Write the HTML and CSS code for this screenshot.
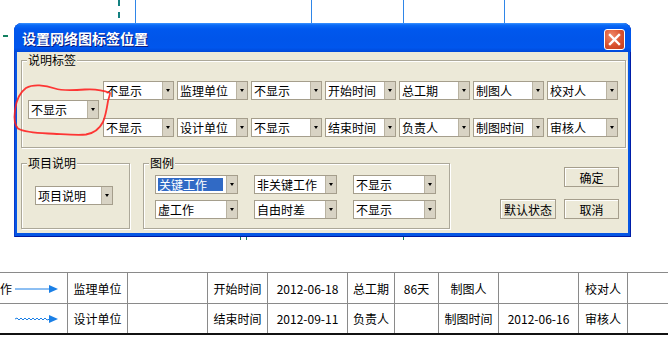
FILE: index.html
```html
<!doctype html>
<html lang="zh-CN">
 <head>
  <meta charset="UTF-8">
  <title>设置网络图标签位置</title>
  <link rel="stylesheet" href="styles.css">
 </head>
 <body>
  <div class="desk">
   <!-- 网络图背景 -->
   <span class="link link-a"></span>
   <span class="link link-b"></span>
   <span class="link link-c"></span>
   <span class="link link-d"></span>
   <span class="virtual"></span>
   <span class="tick tick-a"></span>
   <span class="tick tick-b"></span>
   <span class="tick tick-c"></span>
   <span class="tick tick-d"></span>

   <div class="sheet">
    <div class="row">
     <div class="cell legend-cell"><span class="cut">作</span>
      <svg width="58" height="29" viewBox="0 0 58 29"><line x1="6" y1="15" x2="41" y2="15" stroke="#1a7fe6" stroke-width="1"/><polygon points="40,11 49,15 40,19" fill="#1a7fe6"/></svg>
     </div>
     <div class="cell">监理单位</div>
     <div class="cell"></div>
     <div class="cell">开始时间</div>
     <div class="cell">2012-06-18</div>
     <div class="cell">总工期</div>
     <div class="cell">86天</div>
     <div class="cell">制图人</div>
     <div class="cell"></div>
     <div class="cell">校对人</div>
     <div class="cell"></div>
    </div>
    <div class="row">
     <div class="cell legend-cell"><span class="cut"></span>
      <svg width="58" height="29" viewBox="0 0 58 29"><polyline points="6,15 8,14 10,16 12,14 14,16 16,14 18,16 20,14 22,16 24,14 26,16 28,14 30,16 32,14 34,16 36,14 38,16 41,15" fill="none" stroke="#1a7fe6" stroke-width="1"/><polygon points="40,11 49,15 40,19" fill="#1a7fe6"/></svg>
     </div>
     <div class="cell">设计单位</div>
     <div class="cell"></div>
     <div class="cell">结束时间</div>
     <div class="cell">2012-09-11</div>
     <div class="cell">负责人</div>
     <div class="cell"></div>
     <div class="cell">制图时间</div>
     <div class="cell">2012-06-16</div>
     <div class="cell">审核人</div>
     <div class="cell"></div>
    </div>
   </div>

   <!-- 对话框 -->
   <div class="dialog">
    <div class="titlebar">
     <span class="title">设置网络图标签位置</span>
     <span class="close"><svg width="19" height="19" viewBox="0 0 19 19"><path d="M5 5 L14 14 M14 5 L5 14" stroke="#fff" stroke-width="2.4" stroke-linecap="square"/></svg></span>
    </div>
    <div class="panel">
     <div class="group labels">
      <span class="group-title">说明标签</span>
      <div class="combo"><span class="val">不显示</span><span class="drop"></span></div>
      <div class="label-grid">
       <div class="combo"><span class="val">不显示</span><span class="drop"></span></div>
       <div class="combo"><span class="val">监理单位</span><span class="drop"></span></div>
       <div class="combo"><span class="val">不显示</span><span class="drop"></span></div>
       <div class="combo"><span class="val">开始时间</span><span class="drop"></span></div>
       <div class="combo"><span class="val">总工期</span><span class="drop"></span></div>
       <div class="combo"><span class="val">制图人</span><span class="drop"></span></div>
       <div class="combo"><span class="val">校对人</span><span class="drop"></span></div>
       <div class="combo"><span class="val">不显示</span><span class="drop"></span></div>
       <div class="combo"><span class="val">设计单位</span><span class="drop"></span></div>
       <div class="combo"><span class="val">不显示</span><span class="drop"></span></div>
       <div class="combo"><span class="val">结束时间</span><span class="drop"></span></div>
       <div class="combo"><span class="val">负责人</span><span class="drop"></span></div>
       <div class="combo"><span class="val">制图时间</span><span class="drop"></span></div>
       <div class="combo"><span class="val">审核人</span><span class="drop"></span></div>
      </div>
     </div>

     <div class="lower">
      <div class="group project">
       <span class="group-title">项目说明</span>
       <div class="combo wide"><span class="val">项目说明</span><span class="drop"></span></div>
      </div>
      <div class="group legend">
       <span class="group-title">图例</span>
       <div class="legend-grid">
        <div class="combo"><span class="val"><span class="picked">关键工作</span></span><span class="drop"></span></div>
        <div class="combo"><span class="val">非关键工作</span><span class="drop"></span></div>
        <div class="combo"><span class="val">不显示</span><span class="drop"></span></div>
        <div class="combo"><span class="val">虚工作</span><span class="drop"></span></div>
        <div class="combo"><span class="val">自由时差</span><span class="drop"></span></div>
        <div class="combo"><span class="val">不显示</span><span class="drop"></span></div>
       </div>
      </div>
      <div class="actions">
       <button class="ok">确定</button>
       <button class="reset">默认状态</button>
       <button class="cancel">取消</button>
      </div>
     </div>
    </div>
   </div>

   <!-- 红色圈注 -->
   <svg class="note" width="120" height="60" viewBox="0 0 120 60">
    <path d="M110 13 C100 9 92 9 85 9.5 C72 10.5 62 11 55 8.5 C45 5 33 4 26 8 C19 13 16 22 15 30 C14 38 14 45 18 48.5 C24 52 36 53 48 53.5 C62 54 76 55.5 86 54.5 C95 53 100 48 103 42 C106 35 107 27 108 21 C109 17 110 15 110 13" fill="none" stroke="#f22" stroke-width="1.8" stroke-linecap="round" stroke-opacity="0.9"/>
   </svg>
  </div>
 </body>
</html>
```

FILE: styles.css
```css
body {
    margin: 0;
    background: #fff;
    font-family: "Noto Sans CJK SC", "Liberation Sans", sans-serif;
    font-size: 12px;
    color: #000;
}
.desk {
    position: relative;
    width: 668px;
    height: 351px;
    overflow: hidden;
    padding-top: 272px;
    box-sizing: border-box;
}

/* 背景网络图的线条 */
.link {
    position: absolute;
    top: 0;
    width: 1px;
    height: 24px;
    background: #2f86e8;
}
.link-a { left: 135px; }
.link-b { left: 311px; }
.link-c { left: 403px; }
.link-d { left: 504px; }
.virtual {
    position: absolute;
    left: 118px;
    top: 0;
    height: 18px;
    border-left: 2px dashed #138080;
}
.tick {
    position: absolute;
    background: #138060;
}
.tick-a { left: 3px; top: 35px; width: 5px; height: 2px; }
.tick-b { left: 240px; top: 237px; width: 1px; height: 3px; }
.tick-c { left: 246px; top: 237px; width: 1px; height: 3px; }
.tick-d { left: 403px; top: 237px; width: 1px; height: 3px; }

/* 底部表格 */
.sheet {
    width: 668px;
}
.row {
    display: grid;
    grid-template-columns: 67px 60px 80px 60px 80px 47px 44px 60px 80px 49px 1fr;
    height: 30px;
    border-top: 1px solid #8a8a8a;
}
.row + .row {
    height: 29px;
    border-bottom: 2px solid #111;
}
.cell {
    border-left: 1px solid #8a8a8a;
    display: flex;
    align-items: center;
    justify-content: center;
    white-space: nowrap;
}
.legend-cell {
    border-left: none;
    justify-content: flex-start;
}
.cut {
    flex: none;
    width: 12px;
    margin-left: 0;
}
.legend-cell svg {
    margin-left: -3px;
}

/* 对话框 */
.dialog {
    position: absolute;
    left: 14px;
    top: 23px;
    width: 617px;
    height: 214px;
    box-sizing: border-box;
    padding: 0 3px 4px;
    display: flex;
    flex-direction: column;
    background: #0656e4;
    border-radius: 8px 8px 0 0;
    box-shadow: inset 1px 0 #0a3acb, inset -1px 0 #001ea8, inset 0 -1px #0019a0;
}
.titlebar {
    height: 29px;
    margin: 0 -3px;
    padding: 0 6px 0 8px;
    display: flex;
    align-items: center;
    justify-content: space-between;
    border-radius: 8px 8px 0 0;
    background: linear-gradient(#3d95ff 0, #0a6af6 2px, #0058ee 6px, #0055ea 55%, #0056ed 85%, #0048d8 100%);
}
.title {
    color: #fff;
    font-size: 14px;
    font-weight: bold;
    text-shadow: 1px 1px #0a1a80;
}
.close {
    width: 19px;
    height: 19px;
    margin-top: 4px;
    border: 1px solid #fff;
    border-radius: 3px;
    background: radial-gradient(circle at 35% 30%, #f08a6a, #d9512f 55%, #c23b1b);
    display: flex;
}
.panel {
    flex: 1;
    background: #ece9d8;
}

/* 分组框 */
.group {
    position: relative;
    border: 1px solid #aca899;
    box-shadow: 1px 1px 0 #fff, inset 1px 1px 0 #fff;
    box-sizing: border-box;
}
.group-title {
    position: absolute;
    top: -8px;
    left: 5px;
    padding: 0 1px;
    line-height: 14px;
    background: #ece9d8;
}
.labels {
    margin: 8px 2px 0 4px;
    padding: 20px 5px 10px 6px;
    display: flex;
    align-items: center;
    gap: 4px;
}
.label-grid {
    display: grid;
    grid-template-columns: repeat(7, 71px);
    column-gap: 3px;
    row-gap: 18px;
}
.lower {
    display: flex;
    align-items: flex-start;
    gap: 13px;
    margin: 15px 0 0 4px;
}
.project {
    width: 109px;
    height: 66px;
    padding: 22px 0 0 13px;
}
.legend {
    width: 307px;
    height: 66px;
    padding: 11px 0 0 11px;
}
.legend-grid {
    display: grid;
    grid-template-columns: repeat(3, 83px);
    column-gap: 16px;
    row-gap: 6px;
}

/* 下拉框 */
.combo {
    width: 71px;
    height: 19px;
    box-sizing: border-box;
    border: 1px solid #a59e8c;
    background: #fff;
    display: flex;
}
.legend-grid .combo {
    width: 83px;
}
.combo.wide {
    width: 78px;
}
.val {
    flex: 1;
    padding: 2px 3px 0 2px;
    line-height: 13px;
    white-space: nowrap;
    overflow: hidden;
}
.picked {
    display: block;
    background: #316ac5;
    color: #fff;
    padding-left: 1px;
}
.drop {
    flex: none;
    width: 10px;
    background: #d8d3c4;
    border-left: 1px solid #b9b3a2;
    display: flex;
    align-items: center;
    justify-content: center;
}
.drop::after {
    content: "";
    border-left: 2.5px solid transparent;
    border-right: 2.5px solid transparent;
    border-top: 3px solid #000;
}

/* 按钮 */
.actions {
    display: grid;
    grid-template-columns: 56px 55px;
    grid-template-rows: 20px 20px;
    column-gap: 8px;
    row-gap: 12px;
    margin: 4px 0 0 37px;
}
.actions button {
    margin: 0;
    padding: 0;
    font: inherit;
    color: #000;
    background: #ece9d8;
    border: 1px solid #a59e8c;
    box-shadow: inset 1px 1px #fff;
}
.ok { grid-column: 2; grid-row: 1; }
.reset { grid-column: 1; grid-row: 2; }
.cancel { grid-column: 2; grid-row: 2; }

/* 红色圈注 */
.note {
    position: absolute;
    left: 0;
    top: 80px;
}
```
